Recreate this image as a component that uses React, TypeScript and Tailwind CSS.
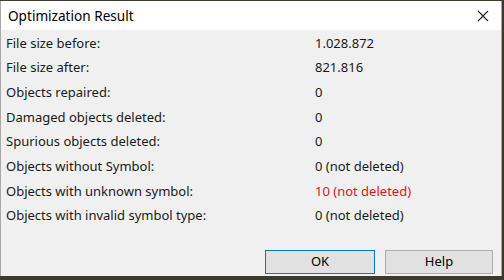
import React from "react";

const rows: { label: string; value: string; red?: boolean }[] = [
  { label: "File size before:", value: "1.028.872" },
  { label: "File size after:", value: "821.816" },
  { label: "Objects repaired:", value: "0" },
  { label: "Damaged objects deleted:", value: "0" },
  { label: "Spurious objects deleted:", value: "0" },
  { label: "Objects without Symbol:", value: "0 (not deleted)" },
  { label: "Objects with unknown symbol:", value: "10 (not deleted)", red: true },
  { label: "Objects with invalid symbol type:", value: "0 (not deleted)" },
];

export default function App() {
  return (
    <div
      className="h-[280px] w-[504px] overflow-hidden bg-[#3b3a2c] pt-px"
      style={{ fontFamily: '"Noto Sans", "Open Sans", Arial, sans-serif' }}
    >
      <div className="flex h-[275px] w-[502px] flex-col border-l border-r border-[#a8a8a8] bg-[#f0f0f0]">
        {/* title bar */}
        <div className="flex h-[29px] items-center justify-between bg-white pl-[7px] pr-[10px]">
          <span className="text-[13.6px] leading-none text-black">Optimization Result</span>
          <svg width="12" height="12" viewBox="0 0 12 12" className="mr-[2px]">
            <path d="M1 1 L11 11 M11 1 L1 11" stroke="#222" strokeWidth="1.1" fill="none" />
          </svg>
        </div>

        {/* results */}
        <div className="flex flex-col pt-[1px] text-[13px] text-[#1a1a1a]">
          {rows.map((r) => (
            <div key={r.label} className="flex h-[24.7px] items-center">
              <span className="w-[314px] pl-[5px]">{r.label}</span>
              <span className={r.red ? "text-[#e81123]" : ""}>{r.value}</span>
            </div>
          ))}
        </div>

        {/* buttons */}
        <div className="mt-auto flex justify-end gap-[10px] pb-[2px] pr-[8px]">
          <button className="h-[24px] w-[110px] border border-[#0078d7] bg-[#e1e1e1] text-[13px] text-black">
            OK
          </button>
          <button className="h-[24px] w-[108px] border border-[#adadad] bg-[#e1e1e1] text-[13px] text-black">
            Help
          </button>
        </div>
      </div>
    </div>
  );
}
